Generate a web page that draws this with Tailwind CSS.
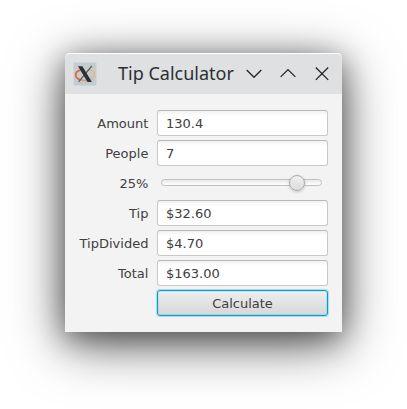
<!DOCTYPE html>
<html lang="en">
<head>
<meta charset="utf-8">
<title>Tip Calculator</title>
<script src="https://cdn.jsdelivr.net/npm/@tailwindcss/browser@4"></script>
</head>
<body class="h-[409px] w-[407px] overflow-hidden bg-white pt-[53px] pl-[65px]">
<main class="h-[279px] w-[277px] rounded-t-[5px] bg-[#f3f3f3] shadow-[0_12px_54px_rgba(0,0,0,0.6),0_6px_28px_rgba(0,0,0,0.4)]">
  <header class="flex h-[41px] items-center rounded-t-[5px] border-t border-white bg-[#dee0e2] pb-px pl-2">
    <svg class="h-6 w-6 shrink-0" viewBox="0 0 24 24" fill="none">
      <rect x=".5" y=".5" width="23" height="23" rx="1" fill="#c4ccd0"/>
      <path d="M5 20L16 21.5L21 17L17 14L9 20Z" fill="#aeb6ba" opacity=".25"/>
      <path d="M8 8C.8 9.5 .8 16.5 8.6 18" stroke="#ea6030" stroke-width="1.7"/>
      <path d="M15.5 7.8C23.6 9 23.4 16.6 14.5 18" stroke="#e9b67c" stroke-width="1.4"/>
      <path d="M8.5 18Q11.5 18.8 14.5 18" stroke="#ee985c" stroke-width="1.4"/>
      <path d="M18.8 4L5.6 19.8" stroke="#5a6064" stroke-width="1.3"/>
      <path d="M5 4.2H9.4L18.9 20H14.5Z" fill="#2d3135"/>
    </svg>
    <h1 class="ml-[21px] w-[117px] whitespace-nowrap pb-0.5 font-['Noto_Sans'] text-[18px] leading-6 text-[#2c2f32]">Tip Calculator</h1>
    <div class="ml-[11px] flex items-center gap-[18px]">
      <svg class="h-4 w-4" viewBox="0 0 16 16" fill="none" stroke="#232629" stroke-width="1.3"><path d="M.7 4L8 11.3L15.3 4"/></svg>
      <svg class="h-4 w-4" viewBox="0 0 16 16" fill="none" stroke="#232629" stroke-width="1.3"><path d="M.7 10.9L8 3.6L15.3 10.9"/></svg>
      <svg class="h-4 w-4" viewBox="0 0 16 16" fill="none" stroke="#232629" stroke-width="1.3"><path d="M1.8 1.5L14.2 13.9M14.2 1.5L1.8 13.9"/></svg>
    </div>
  </header>
  <form class="grid grid-cols-[83.4px_171px] auto-rows-[26px] items-center gap-x-[8.6px] gap-y-1 pt-4 font-['DejaVu_Sans'] text-[13px] leading-[26px] text-[#404040]">
    <label class="pt-0.5 text-right">Amount</label>
    <div class="h-[26px] rounded-[3px] border border-[#c8c8c8] border-t-[#b8b8b8] bg-white bg-linear-to-b from-[#f2f2f2] to-white to-[5px] pl-2 leading-[25px]">130.4</div>
    <label class="pt-0.5 text-right">People</label>
    <div class="h-[26px] rounded-[3px] border border-[#c8c8c8] border-t-[#b8b8b8] bg-white bg-linear-to-b from-[#f2f2f2] to-white to-[5px] pl-2 leading-[25px]">7</div>
    <label class="pt-0.5 text-right">25%</label>
    <div class="flex h-[26px] items-center pl-1">
      <div class="relative -top-px h-[7px] w-[161px] rounded-full border border-[#c0c0c0] bg-linear-to-b from-[#e8e8e8] to-white">
        <div class="absolute -top-[5px] left-[127px] h-4 w-4 rounded-full border border-[#ababab] bg-linear-to-b from-[#f0f0f0] to-[#dcdcdc] shadow-[0_1px_3px_rgba(0,0,0,0.2)]"></div>
      </div>
    </div>
    <label class="pt-0.5 text-right">Tip</label>
    <div class="h-[26px] rounded-[3px] border border-[#c8c8c8] border-t-[#b8b8b8] bg-white bg-linear-to-b from-[#f2f2f2] to-white to-[5px] pl-2 leading-[25px]">$32.60</div>
    <label class="pt-0.5 text-right">TipDivided</label>
    <div class="h-[26px] rounded-[3px] border border-[#c8c8c8] border-t-[#b8b8b8] bg-white bg-linear-to-b from-[#f2f2f2] to-white to-[5px] pl-2 leading-[25px]">$4.70</div>
    <label class="pt-0.5 text-right">Total</label>
    <div class="h-[26px] rounded-[3px] border border-[#c8c8c8] border-t-[#b8b8b8] bg-white bg-linear-to-b from-[#f2f2f2] to-white to-[5px] pl-2 leading-[25px]">$163.00</div>
    <button type="button" class="col-start-2 h-[26px] rounded-[3px] border border-[#039ed3] bg-linear-to-b from-[#eeeeee] to-[#d7d7d7] text-center leading-[25px] shadow-[0_0_1px_1px_rgba(3,158,211,0.3),inset_0_0_0_1px_rgba(3,158,211,0.15)]">Calculate</button>
  </form>
</main>
</body>
</html>
